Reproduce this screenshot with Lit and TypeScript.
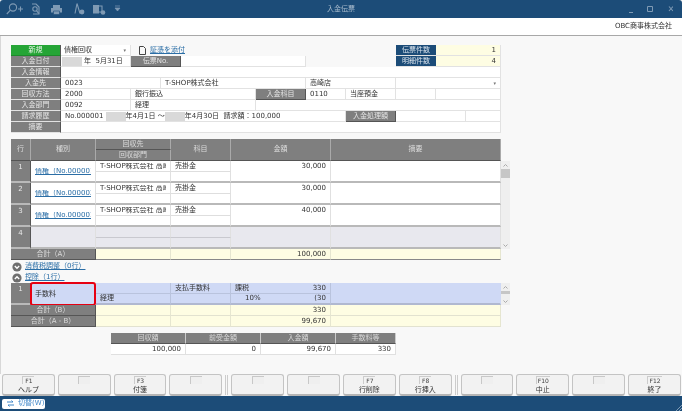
import { LitElement, html, css, svg } from "lit";
import { customElement } from "lit/decorators.js";

const chevron = (up: boolean) =>
  svg`<svg class="circ" viewBox="0 0 10 10" width="10" height="10"><circle cx="5" cy="5" r="4.6" fill="#6e6e6e"/><path d="${up ? "M2.8 6 5 3.8 7.2 6" : "M2.8 4 5 6.2 7.2 4"}" fill="none" stroke="#fff" stroke-width="1.4"/></svg>`;

const rows = [
  { no: "1", kind: "債権（No.000001", amount: "30,000" },
  { no: "2", kind: "債権（No.000002", amount: "30,000" },
  { no: "3", kind: "債権（No.000003", amount: "40,000" },
];

const keys = [
  ["F1", "ヘルプ"], ["", ""], ["F3", "付箋"], ["", ""], null,
  ["", ""], ["", ""], ["F7", "行削除"], ["F8", "行挿入"], null,
  ["", ""], ["F10", "中止"], ["", ""], ["F12", "終了"],
] as const;

@customElement("app-root")
export class AppRoot extends LitElement {
  static styles = css`
    * { box-sizing: border-box; }
    :host {
      display: flex; flex-direction: column; width: 682px; height: 411px; overflow: hidden;
      font: 7px/1 "DejaVu Sans", "Noto Sans CJK JP", sans-serif; color: #333;
      background: #f8f8f8; filter: blur(0.35px);
    }
    .title { flex: 0 0 18px; background: #1c4c78; border-radius: 3px 3px 0 0; display: flex; align-items: center; position: relative; color: #9fb4c8; }
    .tools { display: flex; align-items: center; padding-left: 5px; }
    .tools svg { display: block; }
    .caption { position: absolute; left: 0; right: 0; text-align: center; font-size: 7px; color: #a9bccd; }
    .win { margin-left: auto; display: flex; padding-right: 9px; align-items: center; }
    .company { flex: 0 0 18px; background: #fff; border-bottom: 1px solid #a8a8a8; display: flex; align-items: center; justify-content: flex-end; padding-right: 10px; }
    .main { flex: 1; padding: 9px 0 0 10px; border-left: 1px solid #d8d8d8; }

    .form { display: grid; width: 490px; grid-template-columns: 50px 70px 30px 20px 75px 50px 40px 50px 40px 30px 35px; grid-auto-rows: 11px; }
    .c { background: #fff; border-right: 1px solid #e2e2e2; border-bottom: 1px solid #e2e2e2; display: flex; align-items: center; padding: 0 4px; white-space: nowrap; overflow: hidden; min-width: 0; }
    .l { background: #7f7f7f; color: #e4e4e4; justify-content: center; border-right: 1px solid #555; border-bottom: 1px solid #e2e2e2; display: flex; align-items: center; }
    .g { border-bottom: 1px solid #555; }
    .new { background: #25a536; color: #e8f5e8; border-bottom-color: #1c8a2b; }
    .blue { background: #1c4c78; color: #d8e2ec; justify-content: center; display: flex; align-items: center; border-bottom: 1px solid #e2e2e2; }
    .y { background: #fefde3; justify-content: flex-end; padding-right: 4px; }
    .plain { display: flex; align-items: center; gap: 4px; padding-left: 8px; }
    .arrow { margin-left: auto; color: #777; font-size: 5px; }
    .mask { display: inline-block; width: 20px; height: 9px; background: #d9d9d9; }
    .sel { padding-left: 3px; }
    .sp { gap: 2px; padding-left: 1px; }
    .lnk { color: #2b6ea6; text-decoration: underline; }

    .tbl { display: grid; margin-top: 6px; width: 499px; grid-template-columns: 20px 65px 75px 60px 100px 170px 9px; }
    .h { background: #7f7f7f; color: #dcdcdc; display: flex; align-items: center; justify-content: center; border-right: 1px solid #aaa; border-bottom: 1px solid #555; }
    .h.a { grid-row: span 2; }
    .h.half { height: 11px; }
    .no { background: #7f7f7f; color: #e8e8e8; grid-row: span 2; display: flex; justify-content: center; padding-top: 3px; border-right: 1px solid #555; border-bottom: 2px solid #b9b9b9; }
    .d { background: #fff; border-right: 1px solid #e0e0e0; display: flex; align-items: center; padding: 0 4px; white-space: nowrap; overflow: hidden; height: 11px; }
    .d.t { border-bottom: 1px solid #dedede; height: 11px; }
    .d.b { height: 11px; border-bottom: 2px solid #b9b9b9; }
    .d.s2 { grid-row: span 2; height: auto; border-bottom: 2px solid #b9b9b9; }
    .d.r { justify-content: flex-end; align-items: flex-start; padding-top: 2px; }
    .clip { display: block; overflow: hidden; width: 100%; }
    .d.e { background: #e8e8ee; }
    .d.e.t { border-bottom-color: #c9c9cf; }
    .d.p { background: #cfd9f5; border-right-color: #cfd9f5; }
    .d.p.t { border-bottom-color: #b9c3dd; border-right-color: #b9c3dd; }
    .d.p.b, .d.p.s2 { border-bottom-color: #b0b8d0; }
    .d.p.b { border-right-color: #b9c3dd; }
    .two { justify-content: space-between; }
    .fee { grid-row: span 2; background: #cfd9f5; border: 2.5px solid #e60012; border-radius: 3px; display: flex; align-items: center; padding-left: 3px; margin: -1px 0 -1px -1px; }
    .sum { background: #7f7f7f; color: #dcdcdc; grid-column: span 2; display: flex; justify-content: center; align-items: center; height: 11px; border-bottom: 1px solid #555; border-right: 1px solid #555; }
    .sy { background: #fefde3; border-right: 1px solid #e6e6d0; border-bottom: 1px solid #888; height: 11px; display: flex; align-items: center; justify-content: flex-end; padding-right: 4px; }
    .sy.lt { border-bottom-color: #e2e2d0; }
    .bar { grid-column: 7; background: #efefef; display: flex; flex-direction: column; align-items: center; color: #999; }
    .bar .thumb { align-self: stretch; background: #c6c6c6; height: 9px; }
    .bar .ar { flex: 0 0 8px; display: flex; align-items: center; }
    .bar .fill { flex: 1; }
    .bar svg { display: block; }

    .links { display: flex; flex-direction: column; padding: 1px 0 0 1px; }
    .lrow { display: flex; align-items: center; gap: 3px; height: 11px; }
    .tbl2 { margin-top: 0; }

    .summary { display: grid; width: 285px; margin: 6px 0 0 100px; grid-template-columns: 75px 75px 75px 60px; }
    .sh { background: #7f7f7f; color: #d8d8d8; height: 11px; border-right: 1px solid #ccc; border-bottom: 1px solid #555; display: flex; align-items: center; justify-content: center; }
    .sv { background: #fff; height: 11px; padding: 0 4px; border-right: 1px solid #e0e0e0; border-bottom: 1px solid #e0e0e0; display: flex; align-items: center; justify-content: flex-end; }

    .keys { flex: 0 0 22px; display: flex; gap: 3px; padding: 0 1px 0 2px; background: #f8f8f8; }
    .key { flex: 1; background: #f2f2f2; border: 1px solid #c4c4c4; border-bottom: 2px solid #b5b5b5; border-radius: 3px; display: flex; flex-direction: column; align-items: center; gap: 3px; padding-top: 1px; }
    .fk { font-size: 6px; height: 8px; min-width: 12px; border-top: 1px solid #ccc; border-left: 1px solid #ccc; text-align: center; line-height: 7px; padding: 0 1px; color: #444; }
    .fk.empty { width: 12px; background: #efefef; border-color: #c8c8c8; }
    .sep { flex: 0 0 3px; border-left: 1px solid #ccc; border-right: 1px solid #ccc; margin: 1px 0; }
    .bottom { flex: 0 0 15px; background: #1c4c78; display: flex; align-items: center; justify-content: space-between; padding-left: 2px; }
    .bottom .grip { align-self: flex-end; display: block; }
    .sw { background: #fff; color: #3f86c8; border-radius: 2px; height: 10px; width: 43px; display: flex; align-items: center; gap: 4px; padding-left: 5px; white-space: nowrap; }
    .sw svg { flex: none; }
  `;

  row(r: { no: string; kind: string; amount: string }) {
    return html`
      <div class="no">${r.no}</div>
      <div class="d s2"><span class="lnk clip">${r.kind}</span></div>
      <div class="d t"><span class="clip">T-SHOP株式会社 高崎</span></div><div class="d t">売掛金</div>
      <div class="d s2 r">${r.amount}</div><div class="d s2"></div>
      <div class="d b"></div><div class="d b"></div>`;
  }

  render() {
    const ic = "#7f9ab4";
    return html`
      <div class="title">
        <div class="tools">
          <svg width="118" height="14" viewBox="0 0 118 14" fill="none" stroke="${ic}" stroke-width="1.1">
            <circle cx="8" cy="5.5" r="3.6"/><path d="M5.4 8.2 1.8 12M13 7h5M15.5 4.5v5"/>
            <path d="M27 2h4l3 3v7h-6"/><circle cx="30" cy="7" r="2.2"/><path d="M31.6 8.8 34 11.6" stroke-width="1.3"/>
            <path d="M48 3h7v3h-7zM46 6h11v4.5H46z" fill="${ic}" stroke="none"/><path d="M48.5 9h6v3.5h-6z" fill="${ic}" stroke="#1c4c78" stroke-width=".6"/>
            <path d="M72 1.5 70 11.5M72 1.5 75 11.5"/><circle cx="77" cy="10" r="2.4" fill="${ic}" stroke="none"/>
            <path d="M88 3h6v8.500h-6z" fill="${ic}" stroke="none"/><path d="M94 4h3v6h-3"/><circle cx="98" cy="10.500" r="2.300" fill="${ic}" stroke="none"/>
            <path d="M110 6h5l-2.500 3zM110 4h5" fill="${ic}" stroke-width=".7"/>
          </svg>
        </div>
        <div class="caption">入金伝票</div>
        <div class="win">
          <svg width="44" height="10" viewBox="0 0 44 10" fill="none" stroke="#7f9ab4">
            <path d="M0 8.500h4"/><path d="M18.500 2.500h5v5h-5z"/><path d="M40 2.500l4 4.500M44 2.500l-4 4.500" stroke-width="1.100"/>
          </svg>
        </div>
      </div>
      <div class="company">OBC商事株式会社</div>
      <div class="main">
        <div class="form">
          <div class="l new">新規</div>
          <div class="c sel">債権回収<span class="arrow">▾</span></div>
          <div class="plain" style="grid-column: 3 / 9">
            <svg width="7" height="9" viewBox="0 0 7 9" fill="none" stroke="#444"><path d="M.5.500h4l2 2v6h-6z"/></svg>
            <span class="lnk">証憑を添付</span>
          </div>
          <div class="blue" style="grid-column: 9 / 10">伝票件数</div>
          <div class="c y" style="grid-column: 10 / 12">1</div>

          <div class="l">入金日付</div>
          <div class="c sp"><span class="mask"></span>年&nbsp;&nbsp;5月31日</div>
          <div class="l g" style="grid-column: 3 / 5">伝票No.</div>
          <div class="c" style="grid-column: 5 / 7"></div>
          <div style="grid-column: 7 / 9"></div>
          <div class="blue" style="grid-column: 9 / 10">明細件数</div>
          <div class="c y" style="grid-column: 10 / 12">4</div>

          <div class="l">入金情報</div>
          <div class="c" style="grid-column: 2 / 12"></div>

          <div class="l">入金先</div>
          <div class="c" style="grid-column: 2 / 4">0023</div>
          <div class="c" style="grid-column: 4 / 7">T-SHOP株式会社</div>
          <div class="c" style="grid-column: 7 / 9">高崎店</div>
          <div class="c" style="grid-column: 9 / 12"><span class="arrow">▾</span></div>

          <div class="l">回収方法</div>
          <div class="c">2000</div>
          <div class="c" style="grid-column: 3 / 6">銀行振込</div>
          <div class="l g">入金科目</div>
          <div class="c">0110</div>
          <div class="c">当座預金</div>
          <div class="c"></div>
          <div class="c" style="grid-column: 10 / 12"></div>

          <div class="l">入金部門</div>
          <div class="c">0092</div>
          <div class="c" style="grid-column: 3 / 6">経理</div>
          <div class="c" style="grid-column: 6 / 12"></div>

          <div class="l">請求履歴</div>
          <div class="c" style="grid-column: 2 / 8">No.000001&nbsp;<span class="mask"></span>年4月1日 ～<span class="mask"></span>年4月30日&nbsp;&nbsp;請求額：100,000</div>
          <div class="l g">入金処理額</div>
          <div class="c" style="grid-column: 9 / 11"></div>
          <div class="c"></div>

          <div class="l">摘要</div>
          <div class="c" style="grid-column: 2 / 12"></div>
        </div>

        <div class="tbl">
          <div class="h a">行</div><div class="h a">種別</div>
          <div class="h half">回収先</div>
          <div class="h a">科目</div><div class="h a">金額</div><div class="h a">摘要</div>
          <div style="grid-row: span 2"></div>
          <div class="h half" style="grid-column: 3">回収部門</div>

          <div class="bar" style="grid-row: 3 / 11">
            <span class="ar"><svg width="5" height="3" viewBox="0 0 5 3" fill="none" stroke="#aaa"><path d="M.5 2.500 2.500.500l2 2"/></svg></span>
            <span class="thumb"></span><span class="fill"></span>
            <span class="ar"><svg width="5" height="3" viewBox="0 0 5 3" fill="none" stroke="#aaa"><path d="M.5.500l2 2 2-2"/></svg></span>
          </div>
          ${rows.map((r) => this.row(r))}
          <div class="no">4</div>
          <div class="d e s2"></div><div class="d e t"></div><div class="d e t"></div>
          <div class="d e s2"></div><div class="d e s2"></div>
          <div class="d e b"></div><div class="d e b"></div>

          <div class="sum">合計（A）</div>
          <div class="sy"></div><div class="sy"></div><div class="sy">100,000</div><div class="sy"></div>
        </div>

        <div class="links">
          <div class="lrow">${chevron(false)}<span class="lnk">消費税調整（0行）</span></div>
          <div class="lrow">${chevron(true)}<span class="lnk">控除（1行）</span></div>
        </div>

        <div class="tbl tbl2">
          <div class="no">1</div>
          <div class="fee">手数料</div>
          <div class="d p t"></div><div class="d p t">支払手数料</div>
          <div class="d p t two"><span>課税</span><span>330</span></div>
          <div class="d p s2"></div>
          <div class="bar" style="grid-row: 1 / 3">
            <span class="ar"><svg width="5" height="3" viewBox="0 0 5 3" fill="none" stroke="#aaa"><path d="M.5 2.500 2.500.500l2 2"/></svg></span>
            <span class="thumb" style="height:3px"></span><span class="fill"></span>
            <span class="ar"><svg width="5" height="3" viewBox="0 0 5 3" fill="none" stroke="#aaa"><path d="M.5.500l2 2 2-2"/></svg></span>
          </div>
          <div class="d p b" style="grid-column: 3">経理</div><div class="d p b"></div>
          <div class="d p b two"><span style="margin-left:10px">10%</span><span>(30</span></div>

          <div class="sum">合計（B）</div>
          <div class="sy lt"></div><div class="sy lt"></div><div class="sy lt">330</div><div class="sy lt"></div><div></div>
          <div class="sum">合計（A - B）</div>
          <div class="sy lt"></div><div class="sy lt"></div><div class="sy lt">99,670</div><div class="sy lt"></div><div></div>
        </div>

        <div class="summary">
          <div class="sh">回収額</div><div class="sh">前受金額</div><div class="sh">入金額</div><div class="sh">手数料等</div>
          <div class="sv">100,000</div><div class="sv">0</div><div class="sv">99,670</div><div class="sv">330</div>
        </div>
      </div>
      <div class="keys">
        ${keys.map((k) =>
          k === null
            ? html`<div class="sep"></div>`
            : html`<div class="key"><span class="fk ${k[0] ? "" : "empty"}">${k[0]}</span><span>${k[1]}</span></div>`
        )}
      </div>
      <div class="bottom">
        <div class="sw">
          <svg width="7" height="7" viewBox="0 0 7 7" fill="none" stroke="#3f86c8"><path d="M0 2h6M4.500.500 6 2M7 5H1M2.500 6.500 1 5"/></svg>
          切替(W)
        </div>
        <svg class="grip" width="6" height="6" viewBox="0 0 6 6" fill="none" stroke="#7f9ab4"><path d="M6 0 0 6M6 3 3 6"/></svg>
      </div>
    `;
  }
}
